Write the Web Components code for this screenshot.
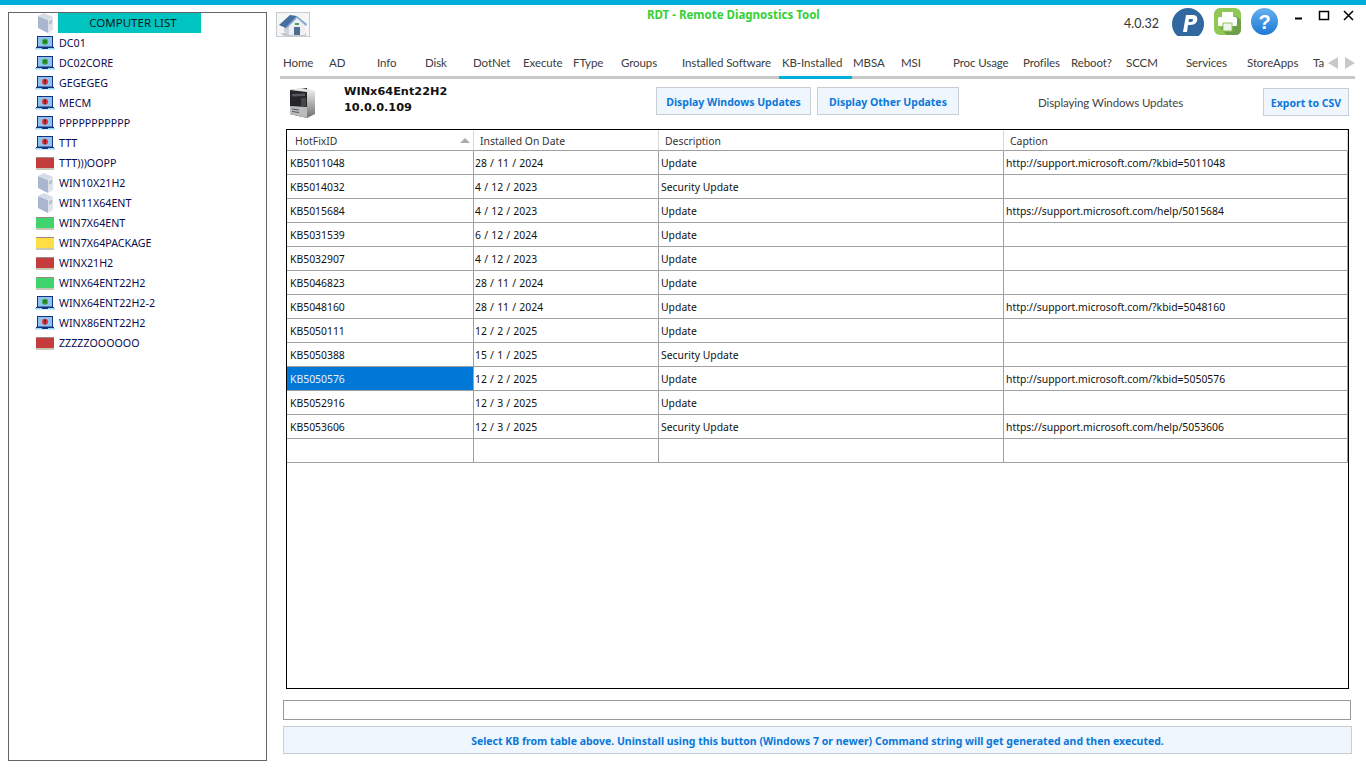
<!DOCTYPE html>
<html>
<head>
<meta charset="utf-8">
<title>RDT</title>
<style>
html, body { margin: 0; height: 100%; background: #fff; overflow: hidden; }
</style>
</head>
<body>
<rdt-app></rdt-app>
<script>
const laptop = (badge) => `<svg width="20" height="14" viewBox="0 0 20 14"><rect x="2.5" y="0.5" width="15" height="10.5" fill="#8fc4f2" stroke="#17357c"/><rect x="1" y="11" width="18" height="1" fill="#17357c"/><rect x="0" y="12" width="20" height="1.5" fill="#9ad8f5"/><rect x="7" y="11" width="6" height="2" fill="#17357c"/>${badge}</svg>`;

const ICONS = {
    server: `<svg width="16" height="20" viewBox="0 0 16 20"><path d="M0 3 L10 7 L10 20 L0 15Z" fill="#aab6cf"/><path d="M10 7 L15 4 L15 17 L10 20Z" fill="#dfe4ec"/><path d="M0 3 L6 0 L15 4 L10 7Z" fill="#d6dce6"/><path d="M11 9l3-1.6M11 11l3-1.6" stroke="#9aa6ba"/></svg>`,
    laptopOk: laptop(`<circle cx="10" cy="5.7" r="3" fill="#3aa83a"/><path d="M8.2 3.9l3.6 3.6M11.8 3.9l-3.6 3.6" stroke="#155f15"/>`),
    laptopBad: laptop(`<circle cx="10" cy="5.7" r="3" fill="#d8343a"/><rect x="9.4" y="3.6" width="1.2" height="2.8" fill="#401010"/><rect x="9.4" y="7" width="1.2" height="1.1" fill="#401010"/>`),
    home: `<svg width="34" height="25" viewBox="0 0 34 25"><rect x="0.5" y="0.5" width="33" height="24" fill="#f6f6f6" stroke="#c6ccd2"/><path d="M4 21 L8 24 L30 24 L30 21Z" fill="#c4c8cc"/><path d="M8 14 L13 11 L13 23 L8 20Z" fill="#cfd2d8"/><path d="M13 13 L21 6 L29 14 L29 23 L13 23Z" fill="#eeeef4"/><path d="M3 13 L14 3 L21 4 L10 16Z" fill="#44709f"/><path d="M11 16 L21 6 L30 14 L31 12 L21 4 L10 15Z" fill="#7fa6cc"/><rect x="18" y="15" width="6" height="8" fill="#4a6f8f"/><rect x="19" y="11" width="4" height="2" fill="#3da85a"/></svg>`,
    tower: `<svg width="28" height="32" viewBox="0 0 28 32"><defs><linearGradient id="t" x1="0" x2="0" y1="0" y2="1"><stop offset="0" stop-color="#f4f4f4"/><stop offset="1" stop-color="#6e6e6e"/></linearGradient></defs><path d="M2 3 L19 1 L19 31 L2 27Z" fill="#26262a"/><path d="M19 1 L27 4 L27 27 L19 31Z" fill="url(#t)"/><path d="M2 3 L12 1 L27 4 L19 5Z" fill="#e6e6e6"/><path d="M2 19 L19 20 L19 31 L2 27Z" fill="#b9bcbe"/><path d="M4 7 L17 6.5 V9 L4 9.5Z" fill="#55585c"/><rect x="13" y="11" width="5" height="8" fill="#44474b"/><path d="M4 22 L11 23 M4 24.5 L11 25.5" stroke="#555"/></svg>`,
    paypal: `<svg width="32" height="28" viewBox="0 0 32 28"><circle cx="16" cy="16" r="16" fill="#31689f"/><path d="M11 24 L14 7 H21 C25 7 26 10 25 13 C24 16 21 17 18 17 H16 L15 24Z M17 11 L16.5 14 H19 C21 14 22 11 20 11Z" fill="#fff" fill-rule="evenodd"/></svg>`,
    printer: `<svg width="27" height="27" viewBox="0 0 27 27"><rect width="27" height="27" rx="6" fill="#8fc855"/><path d="M6 20 L13 27 H21 C25 27 27 25 27 21 V12 L22 8Z" fill="#6e9f48"/><rect x="8" y="4" width="11" height="5" fill="#fff"/><rect x="4" y="9" width="19" height="9" rx="1.5" fill="#fff"/><rect x="9" y="15" width="9" height="8" fill="#f1f4ea" stroke="#8fc855"/></svg>`,
    help: `<svg width="27" height="27" viewBox="0 0 27 27"><defs><linearGradient id="h" x1="0" x2="0" y1="0" y2="1"><stop offset="0" stop-color="#65b0ee"/><stop offset="1" stop-color="#1f78d4"/></linearGradient></defs><circle cx="13.5" cy="13.5" r="13.5" fill="url(#h)"/><text x="13.5" y="21" text-anchor="middle" font-family="Liberation Sans" font-weight="bold" font-size="20" fill="#fff">?</text></svg>`,
    arrowL: `<svg width="10" height="12" viewBox="0 0 10 12"><path d="M10 0 V12 L0 6Z" fill="#c8c8c8"/></svg>`,
    arrowR: `<svg width="10" height="12" viewBox="0 0 10 12"><path d="M0 0 V12 L10 6Z" fill="#c8c8c8"/></svg>`
};

class PcItem extends HTMLElement {
    connectedCallback() {
        const kind = this.getAttribute('kind');
        const blocks = { red: '#c43c3c', green: '#3fd46c', yellow: '#ffdf45' };
        let icon = ICONS[kind];
        if (blocks[kind]) icon = `<span class="block" style="background:${blocks[kind]}"></span>`;
        if (kind === 'server') icon = `<span class="srv">${icon}</span>`;
        this.attachShadow({ mode: 'open' });
        this.shadowRoot.innerHTML = `
            <style>
                :host { display: flex; align-items: center; height: 20px; color: #0c0c50; font: 10.7px "Noto Sans", sans-serif; }
                .ic { width: 24px; display: flex; align-items: center; }
                .srv { margin-left: 3px; display: flex; }
                .block { display: block; box-sizing: border-box; width: 18px; height: 13px; margin-left: 1px; border-top: 1px solid #9a8a8a; border-bottom: 2px solid #c8c8b8; }
            </style>
            <span class="ic">${icon}</span><slot></slot>`;
    }
}
customElements.define('pc-item', PcItem);

class PcList extends HTMLElement {
    connectedCallback() {
        this.attachShadow({ mode: 'open' });
        this.shadowRoot.innerHTML = `
            <style>
                :host { display: block; box-sizing: border-box; width: 259px; margin: 7px 0 7px 8px; border: 1px solid #666; padding: 0 0 0 26px; }
                .head { display: flex; align-items: center; height: 20px; }
                .ic { width: 23px; padding-left: 3px; box-sizing: border-box; display: flex; }
                .title { box-sizing: border-box; width: 143px; height: 20px; padding-left: 7px; background: #00c4c0; color: #101820; text-align: center; font: 11.5px/20px "Noto Sans", sans-serif; }
            </style>
            <div class="head"><span class="ic">${ICONS.server}</span><div class="title">COMPUTER LIST</div></div>
            <slot></slot>`;
    }
}
customElements.define('pc-list', PcList);

class TabBar extends HTMLElement {
    connectedCallback() {
        const tabs = [['Home',46],['AD',48],['Info',48],['Disk',48],['DotNet',50],['Execute',50],['FType',48],['Groups',61],['Installed Software',100],['KB-Installed',73],['MBSA',46,1],['MSI',52],['Proc Usage',70],['Profiles',48],['Reboot?',55],['SCCM',60],['Services',61],['StoreApps',66],['Ta',14]];
        this.attachShadow({ mode: 'open' });
        this.shadowRoot.innerHTML = `
            <style>
                :host { display: flex; align-items: stretch; box-sizing: border-box; width: 1075px; height: 29px; margin-left: 13px; border-bottom: 3px solid #c8c8c8; font: 11.5px Lato, sans-serif; letter-spacing: -0.1px; color: #3c3c3c; position: relative; }
                .t { box-sizing: border-box; line-height: 25px; white-space: nowrap; overflow: hidden; flex: none; margin-bottom: -3px; border-bottom: 3px solid transparent; }
                .t.on { border-bottom-color: #00aedb; }
                .arrows { position: absolute; left: 1048px; top: 7px; display: flex; gap: 7px; }
            </style>
            ${tabs.map(([n, w, p = 3]) => `<div class="t${n === 'KB-Installed' ? ' on' : ''}" style="width:${w}px;padding-left:${p}px">${n}</div>`).join('')}
            <div class="arrows">${ICONS.arrowL}${ICONS.arrowR}</div>`;
    }
}
customElements.define('tab-bar', TabBar);

class AppButton extends HTMLElement {
    connectedCallback() {
        this.attachShadow({ mode: 'open' });
        this.shadowRoot.innerHTML = `
            <style>
                :host { display: flex; align-items: center; justify-content: center; box-sizing: border-box; flex: none; padding-top: 2px; background: #eff6fd; border: 1px solid #c8ced6; color: #0a78d8; font: bold 10.5px "Noto Sans", sans-serif; white-space: nowrap; }
            </style><slot></slot>`;
    }
}
customElements.define('app-button', AppButton);

class KbTable extends HTMLElement {
    connectedCallback() {
        const rows = [
            ['KB5011048','28 / 11 / 2024','Update','http://support.microsoft.com/?kbid=5011048'],
            ['KB5014032','4 / 12 / 2023','Security Update',''],
            ['KB5015684','4 / 12 / 2023','Update','https://support.microsoft.com/help/5015684'],
            ['KB5031539','6 / 12 / 2024','Update',''],
            ['KB5032907','4 / 12 / 2023','Update',''],
            ['KB5046823','28 / 11 / 2024','Update',''],
            ['KB5048160','28 / 11 / 2024','Update','http://support.microsoft.com/?kbid=5048160'],
            ['KB5050111','12 / 2 / 2025','Update',''],
            ['KB5050388','15 / 1 / 2025','Security Update',''],
            ['KB5050576','12 / 2 / 2025','Update','http://support.microsoft.com/?kbid=5050576'],
            ['KB5052916','12 / 3 / 2025','Update',''],
            ['KB5053606','12 / 3 / 2025','Security Update','https://support.microsoft.com/help/5053606'],
            ['','','','']
        ];
        const cell = (v, i, r) => `<div class="c c${i}${r === 9 && i === 0 ? ' sel' : ''}">${v}</div>`;
        this.attachShadow({ mode: 'open' });
        this.shadowRoot.innerHTML = `
            <style>
                :host { display: block; box-sizing: border-box; width: 1063px; height: 560px; border: 1px solid #000; font: 10.4px "Noto Sans", sans-serif; color: #111; }
                .g { display: grid; grid-template-columns: 187px 185px 345px 344px; }
                .h { box-sizing: border-box; height: 21px; line-height: 22px; padding-left: 6px; border-right: 1px solid #d8d8d8; border-bottom: 1px solid #a0a0a0; position: relative; color: #333; }
                .h0 { padding-left: 8px; }
                .h svg { position: absolute; right: 3px; top: 8px; }
                .c { box-sizing: border-box; height: 24px; line-height: 23px; padding: 1px 0 0 2px; border-right: 1px solid #a0a0a0; border-bottom: 1px solid #a0a0a0; white-space: nowrap; }
                .c0 { padding-left: 3px; }
                .c1 { padding-left: 1px; word-spacing: 0.5px; }
                .sel { background: #0078d7; color: #e8f2fb; }
            </style>
            <div class="g">
                <div class="h h0">HotFixID<svg width="10" height="5" viewBox="0 0 10 5"><path d="M5 0 L10 5 H0Z" fill="#ababab"/></svg></div>
                <div class="h">Installed On Date</div><div class="h">Description</div><div class="h">Caption</div>
                ${rows.map((row, r) => row.map((v, i) => cell(v, i, r)).join('')).join('')}
            </div>`;
    }
}
customElements.define('kb-table', KbTable);

class RdtApp extends HTMLElement {
    connectedCallback() {
        this.attachShadow({ mode: 'open' });
        this.shadowRoot.innerHTML = `
            <style>
                :host { display: flex; flex-direction: column; height: 768px; font-family: "Noto Sans", sans-serif; }
                .strip { height: 5px; background: #00aedb; flex: none; }
                .body { display: flex; flex: 1; min-height: 0; }
                .main { flex: none; width: 1098px; display: flex; flex-direction: column; }
                .top { display: flex; height: 45px; position: relative; }
                .home { margin: 7px 0 0 9px; }
                .title { position: absolute; left: 380px; top: 2px; color: #35d035; font: bold 11.5px "Noto Sans", sans-serif; white-space: nowrap; }
                .right { position: absolute; left: 857px; top: 3px; display: flex; align-items: flex-start; }
                .ver { font: 12.5px Lato, sans-serif; color: #333; margin-top: 8px; width: 48px; }
                .right svg { display: block; }
                .info { display: flex; align-items: center; box-sizing: border-box; height: 50px; padding: 0 0 6px 21px; }
                .tower { margin-top: 3px; display: flex; }
                .host { margin-left: 28px; font: bold 11.3px/16px "DejaVu Sans", sans-serif; color: #111; padding-bottom: 2px; width: 312px; }
                .msg { font: 11.5px Lato, sans-serif; letter-spacing: -0.1px; color: #444; margin: 2px 0 0 79px; width: 225px; white-space: nowrap; }
                .cmd { box-sizing: border-box; height: 20px; width: 1068px; margin: 11px 0 0 16px; border: 1px solid #999; }
            </style>
            <div class="strip"></div>
            <div class="body">
                <pc-list>
                    <pc-item kind="laptopOk">DC01</pc-item>
                    <pc-item kind="laptopOk">DC02CORE</pc-item>
                    <pc-item kind="laptopBad">GEGEGEG</pc-item>
                    <pc-item kind="laptopBad">MECM</pc-item>
                    <pc-item kind="laptopBad">PPPPPPPPPPP</pc-item>
                    <pc-item kind="laptopBad">TTT</pc-item>
                    <pc-item kind="red">TTT)))OOPP</pc-item>
                    <pc-item kind="server">WIN10X21H2</pc-item>
                    <pc-item kind="server">WIN11X64ENT</pc-item>
                    <pc-item kind="green">WIN7X64ENT</pc-item>
                    <pc-item kind="yellow">WIN7X64PACKAGE</pc-item>
                    <pc-item kind="red">WINX21H2</pc-item>
                    <pc-item kind="green">WINX64ENT22H2</pc-item>
                    <pc-item kind="laptopOk">WINX64ENT22H2-2</pc-item>
                    <pc-item kind="laptopBad">WINX86ENT22H2</pc-item>
                    <pc-item kind="red">ZZZZZOOOOOO</pc-item>
                </pc-list>
                <div class="main">
                    <div class="top">
                        <div class="home">${ICONS.home}</div>
                        <div class="title">RDT - Remote Diagnostics Tool</div>
                        <div class="right">
                            <span class="ver">4.0.32</span>
                            ${ICONS.paypal}<span style="width:10px"></span>${ICONS.printer}<span style="width:10px"></span>${ICONS.help}
                            <svg style="margin:2px 0 0 17px" width="70" height="12" viewBox="0 0 70 12"><path d="M0 8.5 H7" stroke="#000" stroke-width="2"/><rect x="24.5" y="1.5" width="9" height="8" fill="none" stroke="#000" stroke-width="1.5"/><path d="M49 1 L58 10 M58 1 L49 10" stroke="#000" stroke-width="1.5"/></svg>
                        </div>
                    </div>
                    <tab-bar></tab-bar>
                    <div class="info">
                        <span class="tower">${ICONS.tower}</span>
                        <div class="host">WINx64Ent22H2<br>10.0.0.109</div>
                        <app-button style="width:155px;height:28px">Display Windows Updates</app-button>
                        <app-button style="width:142px;height:28px;margin-left:6px">Display Other Updates</app-button>
                        <span class="msg">Displaying Windows Updates</span>
                        <app-button style="width:86px;height:28px;margin-top:2px">Export to CSV</app-button>
                    </div>
                    <kb-table style="margin-left:19px"></kb-table>
                    <div class="cmd"></div>
                    <app-button style="height:28px;width:1069px;margin:6px 0 0 16px">Select KB from table above. Uninstall using this button (Windows 7 or newer) Command string will get generated and then executed.</app-button>
                </div>
            </div>`;
    }
}
customElements.define('rdt-app', RdtApp);
</script>
</body>
</html>
